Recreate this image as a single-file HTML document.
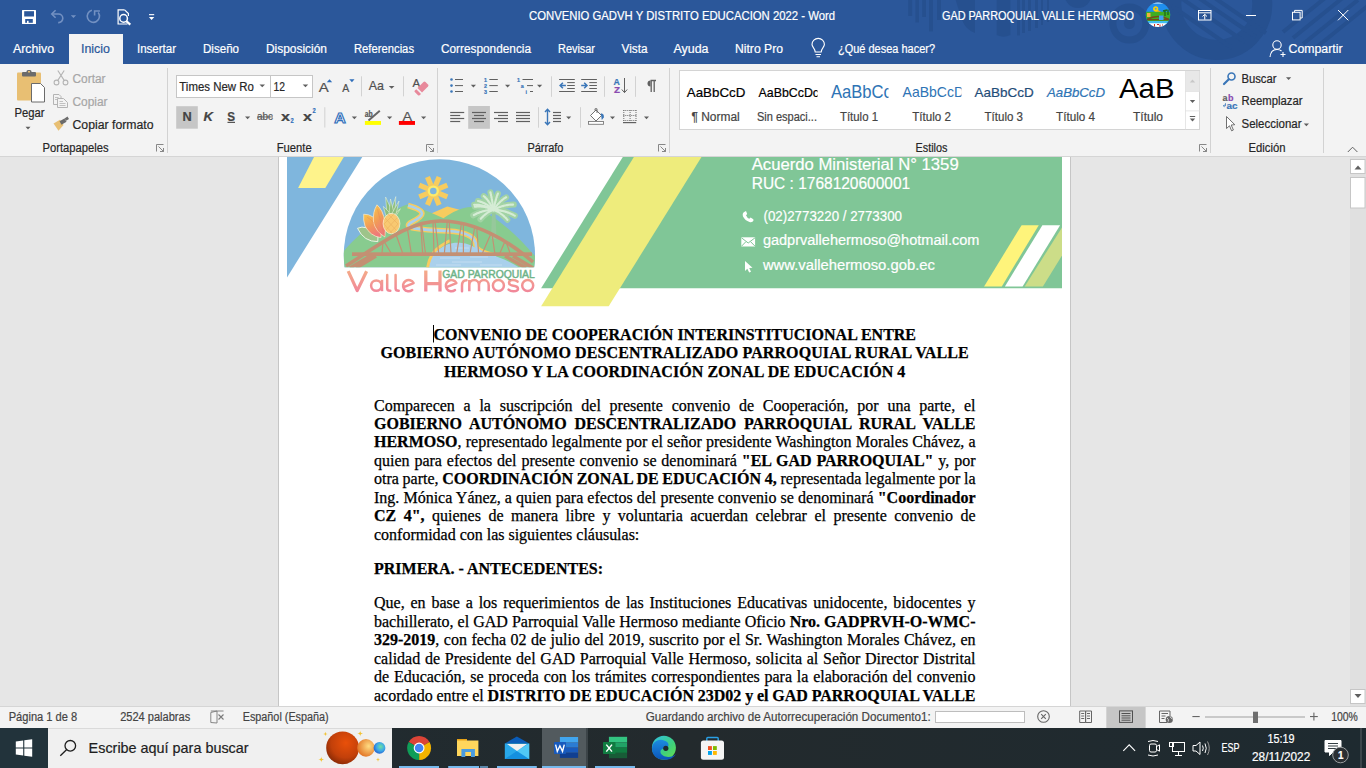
<!DOCTYPE html>
<html><head><meta charset="utf-8"><title>Word</title>
<style>
html,body{margin:0;padding:0;width:1366px;height:768px;overflow:hidden;background:#fff}
#ui{position:absolute;left:0;top:0}
#doc{position:absolute;left:0;top:0;width:1366px;height:706px;overflow:hidden}
.ln{position:absolute;left:374px;height:0;font-family:"Liberation Serif",serif;font-size:16px;line-height:0;color:#000;white-space:nowrap;-webkit-text-stroke:0.25px #000}
.ln b{font-weight:bold}
</style></head><body>
<svg id="ui" width="1366" height="768" viewBox="0 0 1366 768">
<rect x="0" y="0" width="1366" height="64" fill="#2B579A" />
<rect x="0" y="64" width="1366" height="92" fill="#F3F3F3" />
<rect x="0" y="156" width="1366" height="1" fill="#D5D5D5" />
<rect x="0" y="157" width="1366" height="549" fill="#E6E6E6" />
<rect x="278" y="157" width="1" height="549" fill="#C6C6C6" />
<rect x="279" y="157" width="791" height="549" fill="#FFFFFF" />
<rect x="1070" y="157" width="1" height="549" fill="#C6C6C6" />
<rect x="0" y="706" width="1366" height="1" fill="#D5D5D5" />
<rect x="0" y="707" width="1366" height="21" fill="#F3F3F3" />
<defs><linearGradient id="tb" x1="0" x2="1" y1="0" y2="0"><stop offset="0" stop-color="#1F2C32"/><stop offset="0.5" stop-color="#232A2D"/><stop offset="1" stop-color="#1E2A30"/></linearGradient></defs>
<rect x="0" y="728" width="1366" height="40" fill="url(#tb)" />
<rect x="0" y="728" width="48" height="40" fill="#22333B" />
<rect x="48" y="728" width="344" height="40" fill="#F0F0F0" />
<rect x="48" y="728" width="344" height="1" fill="#DADADA" />
<clipPath id="tbc"><rect x="0" y="0" width="1366" height="64"/></clipPath>
<g fill="#26508F" clip-path="url(#tbc)">
<rect x="908.2" y="0" width="4.0" height="16"/>
<rect x="915.4" y="0" width="3.6000000000000227" height="22.5"/>
<rect x="922.2" y="0" width="3.7999999999999545" height="17"/>
<rect x="929" y="0" width="4" height="31.4"/>
<rect x="937" y="0" width="4" height="20"/>
<rect x="1017" y="0" width="3" height="35.4"/>
<rect x="1022" y="0" width="3" height="33"/>
<rect x="1028" y="0" width="3" height="31"/>
<rect x="1035" y="0" width="3" height="28"/>
<rect x="1041" y="0" width="2" height="25"/>
<rect x="1047" y="0" width="2" height="22"/>
<path d="M955.7,0 H975 V33 Q966,30 962,20 Z"/><path d="M996.7,0 H1010.4 V35 Q1003.5,38.5 996.7,35Z"/>
<ellipse cx="1078" cy="-4" rx="13" ry="12"/>
</g>
<g fill="none" stroke="#26508F" clip-path="url(#tbc)">
<circle cx="1129.4" cy="23.5" r="16.5" stroke-width="7"/>
<circle cx="1216.8" cy="4.5" r="45.5" stroke-width="20"/>
<path d="M1181,-2 L1245,42 M1172,6 L1232,48 M1190,-8 L1256,37 M1200,-12 L1266,33" stroke-width="4"/>
<path d="M1293,38 L1345,-4 M1303,44 L1358,0 M1313,50 L1370,4 M1283,32 L1330,-6" stroke-width="4"/>
</g>
<circle cx="1129.4" cy="23.5" r="5.5" fill="#26508F"/>
<text x="529" y="20" font-family="Liberation Sans" font-size="12" fill="#FFFFFF" font-weight="normal" font-style="normal" text-anchor="start" textLength="306" lengthAdjust="spacingAndGlyphs" stroke="#FFFFFF" stroke-width="0.2" >CONVENIO GADVH Y DISTRITO EDUCACION 2022  -  Word</text>
<text x="942" y="20" font-family="Liberation Sans" font-size="12" fill="#FFFFFF" font-weight="normal" font-style="normal" text-anchor="start" textLength="192" lengthAdjust="spacingAndGlyphs" stroke="#FFFFFF" stroke-width="0.2" >GAD PARROQUIAL VALLE HERMOSO</text>
<rect x="69" y="34" width="54" height="30" fill="#F3F3F3" />
<text x="13" y="53" font-family="Liberation Sans" font-size="12" fill="#FFFFFF" font-weight="normal" font-style="normal" text-anchor="start" textLength="41" lengthAdjust="spacingAndGlyphs" stroke="#FFFFFF" stroke-width="0.2" >Archivo</text>
<text x="81" y="53" font-family="Liberation Sans" font-size="12" fill="#2B579A" font-weight="normal" font-style="normal" text-anchor="start" textLength="29" lengthAdjust="spacingAndGlyphs" stroke="#2B579A" stroke-width="0.2" >Inicio</text>
<text x="137" y="53" font-family="Liberation Sans" font-size="12" fill="#FFFFFF" font-weight="normal" font-style="normal" text-anchor="start" textLength="39" lengthAdjust="spacingAndGlyphs" stroke="#FFFFFF" stroke-width="0.2" >Insertar</text>
<text x="203" y="53" font-family="Liberation Sans" font-size="12" fill="#FFFFFF" font-weight="normal" font-style="normal" text-anchor="start" textLength="36" lengthAdjust="spacingAndGlyphs" stroke="#FFFFFF" stroke-width="0.2" >Diseño</text>
<text x="266" y="53" font-family="Liberation Sans" font-size="12" fill="#FFFFFF" font-weight="normal" font-style="normal" text-anchor="start" textLength="61" lengthAdjust="spacingAndGlyphs" stroke="#FFFFFF" stroke-width="0.2" >Disposición</text>
<text x="354" y="53" font-family="Liberation Sans" font-size="12" fill="#FFFFFF" font-weight="normal" font-style="normal" text-anchor="start" textLength="60" lengthAdjust="spacingAndGlyphs" stroke="#FFFFFF" stroke-width="0.2" >Referencias</text>
<text x="441" y="53" font-family="Liberation Sans" font-size="12" fill="#FFFFFF" font-weight="normal" font-style="normal" text-anchor="start" textLength="90" lengthAdjust="spacingAndGlyphs" stroke="#FFFFFF" stroke-width="0.2" >Correspondencia</text>
<text x="558" y="53" font-family="Liberation Sans" font-size="12" fill="#FFFFFF" font-weight="normal" font-style="normal" text-anchor="start" textLength="37" lengthAdjust="spacingAndGlyphs" stroke="#FFFFFF" stroke-width="0.2" >Revisar</text>
<text x="621.5" y="53" font-family="Liberation Sans" font-size="12" fill="#FFFFFF" font-weight="normal" font-style="normal" text-anchor="start" textLength="26" lengthAdjust="spacingAndGlyphs" stroke="#FFFFFF" stroke-width="0.2" >Vista</text>
<text x="673.5" y="53" font-family="Liberation Sans" font-size="12" fill="#FFFFFF" font-weight="normal" font-style="normal" text-anchor="start" textLength="35" lengthAdjust="spacingAndGlyphs" stroke="#FFFFFF" stroke-width="0.2" >Ayuda</text>
<text x="735" y="53" font-family="Liberation Sans" font-size="12" fill="#FFFFFF" font-weight="normal" font-style="normal" text-anchor="start" textLength="48" lengthAdjust="spacingAndGlyphs" stroke="#FFFFFF" stroke-width="0.2" >Nitro Pro</text>
<text x="838" y="53" font-family="Liberation Sans" font-size="12" fill="#FFFFFF" font-weight="normal" font-style="normal" text-anchor="start" textLength="97" lengthAdjust="spacingAndGlyphs" stroke="#FFFFFF" stroke-width="0.2" >¿Qué desea hacer?</text>
<text x="1288.5" y="53" font-family="Liberation Sans" font-size="12" fill="#FFFFFF" font-weight="normal" font-style="normal" text-anchor="start" textLength="54" lengthAdjust="spacingAndGlyphs" stroke="#FFFFFF" stroke-width="0.2" >Compartir</text>
<text x="72.5" y="83" font-family="Liberation Sans" font-size="12" fill="#A6A6A6" font-weight="normal" font-style="normal" text-anchor="start" textLength="33" lengthAdjust="spacingAndGlyphs" stroke="#A6A6A6" stroke-width="0.2" >Cortar</text>
<text x="72.5" y="106" font-family="Liberation Sans" font-size="12" fill="#A6A6A6" font-weight="normal" font-style="normal" text-anchor="start" textLength="35" lengthAdjust="spacingAndGlyphs" stroke="#A6A6A6" stroke-width="0.2" >Copiar</text>
<text x="72.5" y="128.5" font-family="Liberation Sans" font-size="12" fill="#262626" font-weight="normal" font-style="normal" text-anchor="start" textLength="81" lengthAdjust="spacingAndGlyphs" stroke="#262626" stroke-width="0.2" >Copiar formato</text>
<text x="14.5" y="116.5" font-family="Liberation Sans" font-size="12" fill="#262626" font-weight="normal" font-style="normal" text-anchor="start" textLength="30" lengthAdjust="spacingAndGlyphs" stroke="#262626" stroke-width="0.2" >Pegar</text>
<text x="42.5" y="151.5" font-family="Liberation Sans" font-size="12" fill="#262626" font-weight="normal" font-style="normal" text-anchor="start" textLength="66" lengthAdjust="spacingAndGlyphs" stroke="#262626" stroke-width="0.2" >Portapapeles</text>
<text x="276.7" y="151.5" font-family="Liberation Sans" font-size="12" fill="#262626" font-weight="normal" font-style="normal" text-anchor="start" textLength="35" lengthAdjust="spacingAndGlyphs" stroke="#262626" stroke-width="0.2" >Fuente</text>
<text x="527.4" y="151.5" font-family="Liberation Sans" font-size="12" fill="#262626" font-weight="normal" font-style="normal" text-anchor="start" textLength="36" lengthAdjust="spacingAndGlyphs" stroke="#262626" stroke-width="0.2" >Párrafo</text>
<text x="915.5" y="151.5" font-family="Liberation Sans" font-size="12" fill="#262626" font-weight="normal" font-style="normal" text-anchor="start" textLength="32" lengthAdjust="spacingAndGlyphs" stroke="#262626" stroke-width="0.2" >Estilos</text>
<text x="1248.5" y="151.5" font-family="Liberation Sans" font-size="12" fill="#262626" font-weight="normal" font-style="normal" text-anchor="start" textLength="37" lengthAdjust="spacingAndGlyphs" stroke="#262626" stroke-width="0.2" >Edición</text>
<text x="1241.5" y="82.8" font-family="Liberation Sans" font-size="12" fill="#262626" font-weight="normal" font-style="normal" text-anchor="start" textLength="35" lengthAdjust="spacingAndGlyphs" stroke="#262626" stroke-width="0.2" >Buscar</text>
<text x="1241.5" y="105.3" font-family="Liberation Sans" font-size="12" fill="#262626" font-weight="normal" font-style="normal" text-anchor="start" textLength="61" lengthAdjust="spacingAndGlyphs" stroke="#262626" stroke-width="0.2" >Reemplazar</text>
<text x="1241.5" y="128.4" font-family="Liberation Sans" font-size="12" fill="#262626" font-weight="normal" font-style="normal" text-anchor="start" textLength="60" lengthAdjust="spacingAndGlyphs" stroke="#262626" stroke-width="0.2" >Seleccionar</text>
<rect x="176.5" y="75.5" width="94" height="22" fill="#FFFFFF" stroke="#C6C6C6" stroke-width="1"/>
<rect x="270.5" y="75.5" width="42" height="22" fill="#FFFFFF" stroke="#C6C6C6" stroke-width="1"/>
<text x="179.3" y="91" font-family="Liberation Sans" font-size="12" fill="#262626" font-weight="normal" font-style="normal" text-anchor="start" textLength="74.5" lengthAdjust="spacingAndGlyphs" stroke="#262626" stroke-width="0.2" >Times New Ro</text>
<text x="273.6" y="91" font-family="Liberation Sans" font-size="12" fill="#262626" font-weight="normal" font-style="normal" text-anchor="start" textLength="11.5" lengthAdjust="spacingAndGlyphs" stroke="#262626" stroke-width="0.2" >12</text>
<rect x="679.5" y="70.5" width="520" height="59" fill="#FFFFFF" stroke="#D4D4D4" stroke-width="1"/>
<text x="686.8" y="96.8" font-family="Liberation Sans" font-size="13" fill="#000000" font-weight="normal" font-style="normal" text-anchor="start" textLength="58.6" lengthAdjust="spacingAndGlyphs" stroke="#000000" stroke-width="0.2" >AaBbCcD</text>
<clipPath id="st2"><rect x="750" y="72" width="67.5" height="30"/></clipPath><clipPath id="st3"><rect x="825" y="72" width="63.5" height="30"/></clipPath><clipPath id="st4"><rect x="895" y="72" width="66.5" height="30"/></clipPath><clipPath id="st7"><rect x="1110" y="79" width="70" height="25"/></clipPath>
<text x="758.5" y="96.8" font-family="Liberation Sans" font-size="13" fill="#000000" font-weight="normal" font-style="normal" text-anchor="start" textLength="60.5" lengthAdjust="spacingAndGlyphs" stroke="#000000" stroke-width="0.2" clip-path="url(#st2)">AaBbCcDc</text>
<text x="830.9" y="98.4" font-family="Liberation Sans" font-size="17.5" fill="#2E74B5" font-weight="normal" font-style="normal" text-anchor="start" textLength="61" lengthAdjust="spacingAndGlyphs" stroke="#2E74B5" stroke-width="0.2" clip-path="url(#st3)" style="stroke-width:0">AaBbCc</text>
<text x="902.6" y="97.1" font-family="Liberation Sans" font-size="14.5" fill="#2E74B5" font-weight="normal" font-style="normal" text-anchor="start" textLength="61.5" lengthAdjust="spacingAndGlyphs" stroke="#2E74B5" stroke-width="0.2" clip-path="url(#st4)" style="stroke-width:0">AaBbCcD</text>
<text x="974.6" y="97" font-family="Liberation Sans" font-size="13" fill="#1F4D78" font-weight="normal" font-style="normal" text-anchor="start" textLength="59.2" lengthAdjust="spacingAndGlyphs" stroke="#1F4D78" stroke-width="0.2" >AaBbCcD</text>
<text x="1047" y="97" font-family="Liberation Sans" font-size="13" fill="#2E74B5" font-weight="normal" font-style="italic" text-anchor="start" textLength="58" lengthAdjust="spacingAndGlyphs" stroke="#2E74B5" stroke-width="0.2" >AaBbCcD</text>
<text x="1119" y="98.3" font-family="Liberation Sans" font-size="28" fill="#000000" font-weight="normal" font-style="normal" text-anchor="start" textLength="55.6" lengthAdjust="spacingAndGlyphs" stroke="#000000" stroke-width="0.2" clip-path="url(#st7)" style="stroke-width:0">AaB</text>
<text x="691.5" y="120.6" font-family="Liberation Sans" font-size="12" fill="#444444" font-weight="normal" font-style="normal" text-anchor="start" textLength="48.2" lengthAdjust="spacingAndGlyphs" stroke="#444444" stroke-width="0.2" >¶ Normal</text>
<text x="757" y="120.6" font-family="Liberation Sans" font-size="12" fill="#444444" font-weight="normal" font-style="normal" text-anchor="start" textLength="60" lengthAdjust="spacingAndGlyphs" stroke="#444444" stroke-width="0.2" >Sin espaci...</text>
<text x="840" y="120.6" font-family="Liberation Sans" font-size="12" fill="#444444" font-weight="normal" font-style="normal" text-anchor="start" textLength="38" lengthAdjust="spacingAndGlyphs" stroke="#444444" stroke-width="0.2" >Título 1</text>
<text x="912.2" y="120.6" font-family="Liberation Sans" font-size="12" fill="#444444" font-weight="normal" font-style="normal" text-anchor="start" textLength="38.7" lengthAdjust="spacingAndGlyphs" stroke="#444444" stroke-width="0.2" >Título 2</text>
<text x="984.5" y="120.6" font-family="Liberation Sans" font-size="12" fill="#444444" font-weight="normal" font-style="normal" text-anchor="start" textLength="38.5" lengthAdjust="spacingAndGlyphs" stroke="#444444" stroke-width="0.2" >Título 3</text>
<text x="1056" y="120.6" font-family="Liberation Sans" font-size="12" fill="#444444" font-weight="normal" font-style="normal" text-anchor="start" textLength="39" lengthAdjust="spacingAndGlyphs" stroke="#444444" stroke-width="0.2" >Título 4</text>
<text x="1133" y="120.6" font-family="Liberation Sans" font-size="12" fill="#444444" font-weight="normal" font-style="normal" text-anchor="start" textLength="30" lengthAdjust="spacingAndGlyphs" stroke="#444444" stroke-width="0.2" >Título</text>
<rect x="22" y="10" width="14" height="14" fill="#fff" rx="0.5"/>
<rect x="24.2" y="11.2" width="9.8" height="5.3" fill="#2B579A"/>
<rect x="25.2" y="19" width="7.6" height="3.8" fill="#2B579A"/>
<rect x="27" y="20.8" width="1.6" height="2.2" fill="#fff"/>
<g fill="none" stroke="#7391C2" stroke-width="1.6"><path d="M52,14 H58.5 A4.3,4.3 0 0 1 58.5,22.6 H58.2"/><path d="M55.6,10.3 L51.8,14 L55.6,17.7"/></g>
<polygon points="70.8,15.2 76.1,15.2 73.45,18" fill="#7391C2"/>
<g fill="none" stroke="#7391C2" stroke-width="1.6"><path d="M91.9,10.3 A6.1,6.1 0 1 0 98.2,12.5"/><path d="M94.6,15.6 V11 H99.9"/></g>
<g fill="none" stroke="#fff" stroke-width="1.2"><path d="M124.6,9.9 H118.1 V24 H127.5"/><path d="M124.6,9.9 L128.4,13.5 V16"/></g>
<circle cx="123.6" cy="18.4" r="3.8" fill="none" stroke="#fff" stroke-width="1.5"/>
<path d="M126.3,21.1 L130.3,24.6" stroke="#fff" stroke-width="2.2"/>
<rect x="149" y="14.1" width="5.2" height="1.1" fill="#fff"/><polygon points="148.9,17 154.3,17 151.6,20" fill="#fff"/>
<clipPath id="av"><circle cx="1158" cy="14.8" r="12.2"/></clipPath>
<g clip-path="url(#av)"><rect x="1145" y="2" width="26" height="26" fill="#1F8EEE"/><rect x="1145" y="2" width="26" height="1.6" fill="#C8E4F8"/><path d="M1153,12.5 L1158,10 L1162,12.5Z" fill="#F0B020"/><rect x="1145" y="11.8" width="26" height="10" fill="#3FAE22"/><circle cx="1155.7" cy="8.8" r="2.6" fill="#FFD000"/><circle cx="1155.7" cy="8.8" r="1" fill="#3CA0E8"/><path d="M1147,19.5 Q1158,13.5 1169,19.5" fill="none" stroke="#7A4A1A" stroke-width="1.6"/><rect x="1147" y="19" width="22" height="1.3" fill="#7A4A1A"/><rect x="1147" y="13" width="3.5" height="4" fill="#F0B040"/><rect x="1159" y="15.5" width="4.5" height="4.5" fill="#40A0F0"/><path d="M1165,16 V10 M1163,11 L1167,10 M1168,15 V9.5" stroke="#1E6A1E" stroke-width="1.4"/><rect x="1145" y="21" width="26" height="2.2" fill="#40C0F0"/><rect x="1145" y="23.2" width="26" height="6" fill="#FFFFFF"/><path d="M1154.5,24 V27 M1157,24.5 H1159 M1160,24.5 V27 M1162,25 h1" stroke="#D03020" stroke-width="1"/></g>
<g fill="none" stroke="#fff" stroke-width="1"><rect x="1198.5" y="10.5" width="12.5" height="9.5"/><path d="M1198.5,12.8 H1211"/><path d="M1204.75,19.5 V14.5 M1202.5,16.5 L1204.75,14.3 L1207,16.5"/><path d="M1246,15.5 H1256"/><rect x="1292.5" y="12.3" width="7.6" height="7.6"/><path d="M1294.6,12.3 V10.4 H1302.2 V18 H1300.1"/><path d="M1338,10 L1348.3,20.3 M1348.3,10 L1338,20.3"/></g>
<g fill="none" stroke="#fff" stroke-width="1.1"><path d="M815.2,52 C815.2,48.5 812,47 812,44.6 A6.2,6.2 0 0 1 824.4,44.6 C824.4,47 821.2,48.5 821.2,52 Z"/><path d="M815.5,54.5 H821 M816.5,56.8 H820"/></g>
<g fill="none" stroke="#fff" stroke-width="1.1"><circle cx="1277" cy="45" r="4.2"/><path d="M1270,57 C1270.5,51.5 1273,49.5 1277,49.5 C1279,49.5 1280.5,50 1281.5,51"/><path d="M1280.5,54.5 H1285.5 M1283,52 V57"/></g>
<path d="M17,73.5 Q17,72.5 18,72.5 H40 Q41,72.5 41,73.5 V100.5 H18 Q17,100.5 17,99.5Z" fill="#E8BF73"/>
<rect x="22" y="72" width="14" height="4.5" fill="#6B6B6B" rx="1"/><rect x="26.5" y="70" width="5" height="3.5" fill="#6B6B6B" rx="1.5"/><rect x="28" y="71" width="2" height="1.5" fill="#E8BF73"/>
<path d="M31.5,83.5 H40.5 L44.5,87.5 V102 H31.5Z" fill="#fff" stroke="#6B6B6B" stroke-width="1"/>
<polygon points="25.5,126.8 30.5,126.8 28,129.5" fill="#5F5F5F"/>
<g fill="none" stroke="#B4B4B4" stroke-width="1.1"><circle cx="56.5" cy="82.5" r="2.4"/><circle cx="65.5" cy="82.5" r="2.4"/><path d="M57.8,80.4 L64.2,70.5 M64.2,80.4 L57.8,70.5"/></g>
<g fill="#F3F3F3" stroke="#B4B4B4" stroke-width="1"><path d="M53.5,94.5 H59 L61,96.5 V104.5 H53.5Z"/><path d="M57.5,98.5 H63.5 L67.5,102.5 V107.5 H57.5Z"/></g>
<path d="M55,97.5 H58.5 M55,99.5 H57 M59.5,101.5 H63 M59.5,103.5 H65.5 M59.5,105.5 H65.5" stroke="#B4B4B4" stroke-width="0.8"/>
<polygon points="53.5,123.5 60,119.8 63.5,125 58.5,130.8" fill="#E8BF73"/>
<path d="M59.5,121.3 L64.5,118.5 L66.5,121.8 L61.5,124.8Z" fill="#6B6B6B"/><path d="M64.5,118.5 L67.5,116.5 L69,119 L66,120.8" fill="#6B6B6B"/>
<g fill="none" stroke="#7A7A7A" stroke-width="0.9"><path d="M156.5,151.5 V144.5 H163.5"/><path d="M158.5,146.5 L163.5,151.5 M163.5,148 V151.5 H160"/></g>
<g fill="none" stroke="#7A7A7A" stroke-width="0.9"><path d="M426.5,151.5 V144.5 H433.5"/><path d="M428.5,146.5 L433.5,151.5 M433.5,148 V151.5 H430"/></g>
<g fill="none" stroke="#7A7A7A" stroke-width="0.9"><path d="M658.5,151.5 V144.5 H665.5"/><path d="M660.5,146.5 L665.5,151.5 M665.5,148 V151.5 H662"/></g>
<g fill="none" stroke="#7A7A7A" stroke-width="0.9"><path d="M1199.5,151.5 V144.5 H1206.5"/><path d="M1201.5,146.5 L1206.5,151.5 M1206.5,148 V151.5 H1203"/></g>
<rect x="167.0" y="68" width="1" height="85" fill="#D2D2D2"/>
<rect x="437.0" y="68" width="1" height="85" fill="#D2D2D2"/>
<rect x="669.0" y="68" width="1" height="85" fill="#D2D2D2"/>
<rect x="1210.0" y="68" width="1" height="85" fill="#D2D2D2"/>
<rect x="1323.0" y="68" width="1" height="85" fill="#D2D2D2"/>
<polygon points="259.5,84.5 265,84.5 262.25,87.3" fill="#5F5F5F"/>
<polygon points="302.7,84.5 308.2,84.5 305.45,87.3" fill="#5F5F5F"/>
<text x="318.8" y="92.3" font-family="Liberation Sans" font-size="13.5" fill="#505050" font-weight="normal" font-style="normal" text-anchor="start" textLength="10" lengthAdjust="spacingAndGlyphs" stroke="#505050" stroke-width="0.2" >A</text>
<polygon points="326.8,82.3 332.2,82.3 329.5,79.2" fill="#2F6EBA"/>
<text x="342.2" y="92.3" font-family="Liberation Sans" font-size="10" fill="#505050" font-weight="normal" font-style="normal" text-anchor="start" textLength="7" lengthAdjust="spacingAndGlyphs" stroke="#505050" stroke-width="0.2" >A</text>
<polygon points="349.3,79.2 354.5,79.2 351.9,82.2" fill="#2F6EBA"/>
<rect x="361" y="76.3" width="1" height="20" fill="#D2D2D2"/><rect x="403" y="76.3" width="1" height="20" fill="#D2D2D2"/>
<text x="368.8" y="90" font-family="Liberation Sans" font-size="13" fill="#505050" font-weight="normal" font-style="normal" text-anchor="start" textLength="15.2" lengthAdjust="spacingAndGlyphs" stroke="#505050" stroke-width="0.2" >Aa</text>
<polygon points="388.8,86 394.5,86 391.65,88.8" fill="#5F5F5F"/>
<text x="412.6" y="87.2" font-family="Liberation Sans" font-size="10" fill="#505050" font-weight="normal" font-style="normal" text-anchor="start" textLength="7.6" lengthAdjust="spacingAndGlyphs" stroke="#505050" stroke-width="0.2" >A</text>
<path d="M417.5,88 L423.5,82 Q424.5,81 425.5,82 L428,84.5 Q429,85.5 428,86.5 L422,92.5 Z" fill="#E8899B"/><path d="M416.3,89.2 L421,93.9 L419.6,95.2 Q418.8,96 418,95.2 L414.8,92 Q414,91.2 414.8,90.4 Z" fill="#E8899B"/>
<rect x="176.2" y="106.2" width="21.6" height="22.5" fill="#C6C6C6"/>
<text x="182.5" y="120.5" font-family="Liberation Sans" font-size="12" fill="#444444" font-weight="bold" font-style="normal" text-anchor="start" textLength="9.2" lengthAdjust="spacingAndGlyphs" stroke="#444444" stroke-width="0.2" >N</text>
<text x="203.5" y="120.5" font-family="Liberation Sans" font-size="12" fill="#444444" font-weight="bold" font-style="italic" text-anchor="start" textLength="9.5" lengthAdjust="spacingAndGlyphs" stroke="#444444" stroke-width="0.2" >K</text>
<text x="227.3" y="120.5" font-family="Liberation Sans" font-size="12" fill="#444444" font-weight="bold" font-style="normal" text-anchor="start" textLength="7.8" lengthAdjust="spacingAndGlyphs" stroke="#444444" stroke-width="0.2" >S</text>
<rect x="227.5" y="121.8" width="7.5" height="1.1" fill="#444444"/>
<polygon points="245,116.4 250.2,116.4 247.6,119.2" fill="#5F5F5F"/>
<text x="257" y="120.3" font-family="Liberation Sans" font-size="10.5" fill="#555555" font-weight="normal" font-style="normal" text-anchor="start" textLength="16" lengthAdjust="spacingAndGlyphs" stroke="#555555" stroke-width="0.2" >abc</text>
<rect x="257" y="116.5" width="16" height="0.9" fill="#555555"/>
<text x="281" y="120.5" font-family="Liberation Sans" font-size="12" fill="#444444" font-weight="bold" font-style="normal" text-anchor="start" textLength="9" lengthAdjust="spacingAndGlyphs" stroke="#444444" stroke-width="0.2" >x</text>
<text x="290.5" y="122.5" font-family="Liberation Sans" font-size="6.5" fill="#2F6EBA" font-weight="bold" font-style="normal" text-anchor="start" textLength="3.2" lengthAdjust="spacingAndGlyphs" stroke="#2F6EBA" stroke-width="0.2" >2</text>
<text x="303" y="120.5" font-family="Liberation Sans" font-size="12" fill="#444444" font-weight="bold" font-style="normal" text-anchor="start" textLength="9" lengthAdjust="spacingAndGlyphs" stroke="#444444" stroke-width="0.2" >x</text>
<text x="312.5" y="112.5" font-family="Liberation Sans" font-size="6.5" fill="#2F6EBA" font-weight="bold" font-style="normal" text-anchor="start" textLength="3.2" lengthAdjust="spacingAndGlyphs" stroke="#2F6EBA" stroke-width="0.2" >2</text>
<rect x="324.3" y="107.2" width="1" height="20.3" fill="#D2D2D2"/>
<text x="334.3" y="122.5" font-family="Liberation Sans" font-size="15" font-weight="bold" fill="#fff" stroke="#2F6EBA" stroke-width="1.1" textLength="11.5" lengthAdjust="spacingAndGlyphs">A</text>
<polygon points="351.8,116.4 357,116.4 354.4,119.2" fill="#5F5F5F"/>
<text x="364.8" y="116.8" font-family="Liberation Sans" font-size="8.5" fill="#555555" font-weight="bold" font-style="normal" text-anchor="start" textLength="8" lengthAdjust="spacingAndGlyphs" stroke="#555555" stroke-width="0.2" >ab</text>
<path d="M368.5,120.5 L379.8,110.8" stroke="#666" stroke-width="2"/>
<rect x="364.9" y="121" width="16.1" height="3.9" fill="#FFFF00"/>
<polygon points="387,116.4 392.2,116.4 389.6,119.2" fill="#5F5F5F"/>
<text x="402.5" y="120.8" font-family="Liberation Sans" font-size="13" fill="#555555" font-weight="normal" font-style="normal" text-anchor="start" textLength="9.6" lengthAdjust="spacingAndGlyphs" stroke="#555555" stroke-width="0.2" >A</text>
<rect x="398.9" y="121" width="16.1" height="3.9" fill="#FF0000"/>
<polygon points="421,116.4 426.2,116.4 423.6,119.2" fill="#5F5F5F"/>
<circle cx="451.5" cy="79.5" r="1.3" fill="#3A76B8"/><rect x="455" y="79.0" width="8" height="1" fill="#606060"/>
<rect x="489.3" y="79.0" width="8.5" height="1" fill="#606060"/>
<circle cx="451.5" cy="85.6" r="1.3" fill="#3A76B8"/><rect x="455" y="85.1" width="8" height="1" fill="#606060"/>
<rect x="489.3" y="85.1" width="8.5" height="1" fill="#606060"/>
<circle cx="451.5" cy="91.5" r="1.3" fill="#3A76B8"/><rect x="455" y="91.0" width="8" height="1" fill="#606060"/>
<rect x="489.3" y="91.0" width="8.5" height="1" fill="#606060"/>
<text x="484" y="81.8" font-family="Liberation Sans" font-size="5.5" fill="#3A76B8" font-weight="bold" font-style="normal" text-anchor="start" textLength="3" lengthAdjust="spacingAndGlyphs" stroke="#3A76B8" stroke-width="0.2" >1</text>
<text x="484" y="87.9" font-family="Liberation Sans" font-size="5.5" fill="#3A76B8" font-weight="bold" font-style="normal" text-anchor="start" textLength="3" lengthAdjust="spacingAndGlyphs" stroke="#3A76B8" stroke-width="0.2" >2</text>
<text x="484" y="93.8" font-family="Liberation Sans" font-size="5.5" fill="#3A76B8" font-weight="bold" font-style="normal" text-anchor="start" textLength="3" lengthAdjust="spacingAndGlyphs" stroke="#3A76B8" stroke-width="0.2" >3</text>
<text x="517" y="81.8" font-family="Liberation Sans" font-size="5.5" fill="#3A76B8" font-weight="bold" font-style="normal" text-anchor="start" textLength="3" lengthAdjust="spacingAndGlyphs" stroke="#3A76B8" stroke-width="0.2" >1</text>
<rect x="522.5" y="79" width="10.5" height="1" fill="#606060"/>
<text x="520.8" y="87.9" font-family="Liberation Sans" font-size="5.5" fill="#3A76B8" font-weight="bold" font-style="normal" text-anchor="start" textLength="3" lengthAdjust="spacingAndGlyphs" stroke="#3A76B8" stroke-width="0.2" >a</text>
<rect x="527" y="85.1" width="6" height="1" fill="#606060"/>
<text x="525.5" y="93.8" font-family="Liberation Sans" font-size="5.5" fill="#3A76B8" font-weight="bold" font-style="normal" text-anchor="start" textLength="1.5" lengthAdjust="spacingAndGlyphs" stroke="#3A76B8" stroke-width="0.2" >i</text>
<rect x="530" y="91" width="3" height="1" fill="#606060"/>
<polygon points="470.8,84.7 476.0,84.7 473.40000000000003,87.5" fill="#5F5F5F"/>
<polygon points="505,84.7 510.2,84.7 507.6,87.5" fill="#5F5F5F"/>
<polygon points="537,84.7 542.2,84.7 539.6,87.5" fill="#5F5F5F"/>
<rect x="551.0" y="76.3" width="1" height="20.5" fill="#D2D2D2"/>
<rect x="604.0" y="76.3" width="1" height="20.5" fill="#D2D2D2"/>
<rect x="635.0" y="76.3" width="1" height="20.5" fill="#D2D2D2"/>
<rect x="559.1" y="79" width="15.7" height="1" fill="#606060"/><rect x="559.1" y="91" width="15.7" height="1" fill="#606060"/>
<rect x="567.2" y="82.1" width="7.6" height="1" fill="#606060"/>
<rect x="567.2" y="85" width="7.6" height="1" fill="#606060"/>
<rect x="567.2" y="88" width="7.6" height="1" fill="#606060"/>
<path d="M565.9,85.5 H560.3000000000001 M562.9,82.7 L560.1,85.5 L562.9,88.3" fill="none" stroke="#3A76B8" stroke-width="1.5"/>
<rect x="581.2" y="79" width="15.7" height="1" fill="#606060"/><rect x="581.2" y="91" width="15.7" height="1" fill="#606060"/>
<rect x="589.3000000000001" y="82.1" width="7.6" height="1" fill="#606060"/>
<rect x="589.3000000000001" y="85" width="7.6" height="1" fill="#606060"/>
<rect x="589.3000000000001" y="88" width="7.6" height="1" fill="#606060"/>
<path d="M581.2,85.5 H586.8000000000001 M584.2,82.7 L587.0,85.5 L584.2,88.3" fill="none" stroke="#3A76B8" stroke-width="1.5"/>
<text x="613.6" y="84.7" font-family="Liberation Sans" font-size="8.5" fill="#3A76B8" font-weight="bold" font-style="normal" text-anchor="start" textLength="6.3" lengthAdjust="spacingAndGlyphs" stroke="#3A76B8" stroke-width="0.2" >A</text>
<text x="613.9" y="92.8" font-family="Liberation Sans" font-size="8.5" fill="#8A4BB0" font-weight="bold" font-style="normal" text-anchor="start" textLength="6" lengthAdjust="spacingAndGlyphs" stroke="#8A4BB0" stroke-width="0.2" >Z</text>
<path d="M624.5,78 V92.5 M621.8,89.5 L624.5,92.6 L627.2,89.5" fill="none" stroke="#606060" stroke-width="1"/>
<path d="M650.5,80.5 A3,3 0 0 0 650.5,86.5 Z" fill="#606060"/><path d="M650.5,80.5 H656 M651.2,80.5 V92 M654.2,80.5 V92" stroke="#606060" stroke-width="1.3" fill="none"/>
<rect x="450.2" y="111.9" width="14" height="1.2" fill="#606060"/>
<rect x="450.2" y="114.9" width="10" height="1.2" fill="#606060"/>
<rect x="450.2" y="117.9" width="14" height="1.2" fill="#606060"/>
<rect x="450.2" y="120.9" width="10" height="1.2" fill="#606060"/>
<rect x="468.2" y="106" width="21.7" height="22.8" fill="#C6C6C6"/>
<rect x="472" y="111.9" width="14" height="1.2" fill="#606060"/>
<rect x="474" y="114.9" width="10" height="1.2" fill="#606060"/>
<rect x="472" y="117.9" width="14" height="1.2" fill="#606060"/>
<rect x="474" y="120.9" width="10" height="1.2" fill="#606060"/>
<rect x="494" y="111.9" width="14" height="1.2" fill="#606060"/>
<rect x="498" y="114.9" width="10" height="1.2" fill="#606060"/>
<rect x="494" y="117.9" width="14" height="1.2" fill="#606060"/>
<rect x="498" y="120.9" width="10" height="1.2" fill="#606060"/>
<rect x="516" y="111.9" width="14" height="1.2" fill="#606060"/>
<rect x="516" y="114.9" width="14" height="1.2" fill="#606060"/>
<rect x="516" y="117.9" width="14" height="1.2" fill="#606060"/>
<rect x="516" y="120.9" width="14" height="1.2" fill="#606060"/>
<rect x="538" y="107.2" width="1" height="20.5" fill="#D2D2D2"/><rect x="580" y="107.2" width="1" height="20.5" fill="#D2D2D2"/>
<path d="M547.5,109.5 V124.5 M545,112 L547.5,109.3 L550,112 M545,122 L547.5,124.7 L550,122" fill="none" stroke="#3A76B8" stroke-width="1.4"/>
<rect x="553" y="111.9" width="8" height="1.2" fill="#606060"/>
<rect x="553" y="114.9" width="8" height="1.2" fill="#606060"/>
<rect x="553" y="117.9" width="8" height="1.2" fill="#606060"/>
<rect x="553" y="120.9" width="8" height="1.2" fill="#606060"/>
<polygon points="566.2,116.4 571.2,116.4 568.7,119.2" fill="#5F5F5F"/>
<polygon points="610,116.4 615,116.4 612.5,119.2" fill="#5F5F5F"/>
<polygon points="644,116.4 649,116.4 646.5,119.2" fill="#5F5F5F"/>
<path d="M590.5,115.5 L596,110 L601.5,115.5 L596,121Z" fill="#fff" stroke="#606060" stroke-width="0.9"/><path d="M595,110.5 V108.8 H597 V113" fill="none" stroke="#606060" stroke-width="0.9"/>
<path d="M600.8,113.2 Q604.5,113.8 603.8,117.5 L601.8,120 Z" fill="#3A76B8"/>
<rect x="588.5" y="121.5" width="15" height="2.8" fill="#fff" stroke="#7A7A7A" stroke-width="0.9"/>
<rect x="623.3" y="110.0" width="1" height="1" fill="#707070"/>
<rect x="625.3" y="110.0" width="1" height="1" fill="#707070"/>
<rect x="627.3" y="110.0" width="1" height="1" fill="#707070"/>
<rect x="629.3" y="110.0" width="1" height="1" fill="#707070"/>
<rect x="631.3" y="110.0" width="1" height="1" fill="#707070"/>
<rect x="633.3" y="110.0" width="1" height="1" fill="#707070"/>
<rect x="635.3" y="110.0" width="1" height="1" fill="#707070"/>
<rect x="623.3" y="115.0" width="1" height="1" fill="#707070"/>
<rect x="625.3" y="115.0" width="1" height="1" fill="#707070"/>
<rect x="627.3" y="115.0" width="1" height="1" fill="#707070"/>
<rect x="629.3" y="115.0" width="1" height="1" fill="#707070"/>
<rect x="631.3" y="115.0" width="1" height="1" fill="#707070"/>
<rect x="633.3" y="115.0" width="1" height="1" fill="#707070"/>
<rect x="635.3" y="115.0" width="1" height="1" fill="#707070"/>
<rect x="623.3" y="120.0" width="1" height="1" fill="#707070"/>
<rect x="625.3" y="120.0" width="1" height="1" fill="#707070"/>
<rect x="627.3" y="120.0" width="1" height="1" fill="#707070"/>
<rect x="629.3" y="120.0" width="1" height="1" fill="#707070"/>
<rect x="631.3" y="120.0" width="1" height="1" fill="#707070"/>
<rect x="633.3" y="120.0" width="1" height="1" fill="#707070"/>
<rect x="635.3" y="120.0" width="1" height="1" fill="#707070"/>
<rect x="623.3" y="110" width="1" height="1" fill="#707070"/>
<rect x="623.3" y="112" width="1" height="1" fill="#707070"/>
<rect x="623.3" y="114" width="1" height="1" fill="#707070"/>
<rect x="623.3" y="116" width="1" height="1" fill="#707070"/>
<rect x="623.3" y="118" width="1" height="1" fill="#707070"/>
<rect x="623.3" y="120" width="1" height="1" fill="#707070"/>
<rect x="629.6" y="110" width="1" height="1" fill="#707070"/>
<rect x="629.6" y="112" width="1" height="1" fill="#707070"/>
<rect x="629.6" y="114" width="1" height="1" fill="#707070"/>
<rect x="629.6" y="116" width="1" height="1" fill="#707070"/>
<rect x="629.6" y="118" width="1" height="1" fill="#707070"/>
<rect x="629.6" y="120" width="1" height="1" fill="#707070"/>
<rect x="635.5" y="110" width="1" height="1" fill="#707070"/>
<rect x="635.5" y="112" width="1" height="1" fill="#707070"/>
<rect x="635.5" y="114" width="1" height="1" fill="#707070"/>
<rect x="635.5" y="116" width="1" height="1" fill="#707070"/>
<rect x="635.5" y="118" width="1" height="1" fill="#707070"/>
<rect x="635.5" y="120" width="1" height="1" fill="#707070"/>
<rect x="623" y="122" width="13.2" height="1.2" fill="#606060"/>
<rect x="1185.5" y="71" width="14" height="20" fill="#E8E8E8"/><rect x="1185" y="70.8" width="0.8" height="58.5" fill="#E0E0E0"/>
<rect x="1185" y="91" width="14.7" height="0.8" fill="#E0E0E0"/><rect x="1185" y="110.5" width="14.7" height="0.8" fill="#E0E0E0"/>
<polygon points="1189.8,82.5 1195.2,82.5 1192.5,79.5" fill="#C8C8C8"/>
<polygon points="1189.8,100 1195.2,100 1192.5,103" fill="#606060"/>
<rect x="1189.8" y="116" width="5.4" height="1" fill="#606060"/><polygon points="1189.8,118.5 1195.2,118.5 1192.5,121.5" fill="#606060"/>
<circle cx="1231.5" cy="76.5" r="3.5" fill="none" stroke="#3A76B8" stroke-width="1.6"/><path d="M1228.8,79.3 L1224,84" stroke="#3A76B8" stroke-width="2.2" stroke-linecap="round"/>
<polygon points="1286,77.3 1291.2,77.3 1288.6,80" fill="#5F5F5F"/>
<text x="1222.5" y="100.8" font-family="Liberation Sans" font-size="9" fill="#606060" font-weight="bold" font-style="normal" text-anchor="start" textLength="5" lengthAdjust="spacingAndGlyphs" stroke="#606060" stroke-width="0.2" >a</text>
<text x="1228" y="100.8" font-family="Liberation Sans" font-size="9" fill="#8A4BB0" font-weight="bold" font-style="normal" text-anchor="start" textLength="5.5" lengthAdjust="spacingAndGlyphs" stroke="#8A4BB0" stroke-width="0.2" >b</text>
<text x="1226.5" y="108.5" font-family="Liberation Sans" font-size="9" fill="#3A76B8" font-weight="bold" font-style="normal" text-anchor="start" textLength="11" lengthAdjust="spacingAndGlyphs" stroke="#3A76B8" stroke-width="0.2" >ac</text>
<path d="M1225.5,103.2 V105.8 H1223.5 M1224.6,104.8 L1223.3,105.8 L1224.6,106.8" fill="none" stroke="#3A76B8" stroke-width="0.8"/>
<path d="M1226.5,116.5 L1234.8,124.7 L1231.2,125 L1233.4,130 L1231.6,130.8 L1229.5,125.8 L1226.5,128.5 Z" fill="#fff" stroke="#606060" stroke-width="0.9"/>
<polygon points="1303.8,123.5 1309,123.5 1306.4,126.2" fill="#5F5F5F"/>
<path d="M1347.8,152 L1352.6,147.2 L1357.4,152" fill="none" stroke="#606060" stroke-width="1"/>
<defs><clipPath id="pg"><rect x="279" y="157" width="791" height="549"/></clipPath></defs>
<g clip-path="url(#pg)">
<polygon points="287,157 362.3,157 287,277.4" fill="#7FB6DD"/>
<polygon points="314,157 343.8,157 325.3,188 298.1,188" fill="#FEF38B"/>
<polygon points="622.8,157 1062,157 1062,288.3 541.1,288.3" fill="#80C697"/>
<polygon points="633.9,157 701.5,157 608.7,306.3 541.1,306.3" fill="#EEEC7C"/>
<polygon points="1021.6,225.2 1038.75,225.2 1001.8,286.4 984.1,286.4" fill="#FEF47B"/>
<polygon points="1042.4,225.2 1060.1,225.2 1022.6,286.4 1004.9,286.4" fill="#FFFFFF"/>
<polygon points="1062,227.5 1062,255.6 1042.9,286.4 1024.7,286.4" fill="#CCDD88"/>
</g>
<text x="751.7" y="169.6" font-family="Liberation Sans" font-size="16" fill="#FFFFFF" font-weight="normal" font-style="normal" text-anchor="start" textLength="207" lengthAdjust="spacingAndGlyphs" stroke="#FFFFFF" stroke-width="0.2" >Acuerdo Ministerial N° 1359</text>
<text x="751.7" y="189" font-family="Liberation Sans" font-size="16" fill="#FFFFFF" font-weight="normal" font-style="normal" text-anchor="start" textLength="158.5" lengthAdjust="spacingAndGlyphs" stroke="#FFFFFF" stroke-width="0.2" >RUC : 1768120600001</text>
<text x="763.5" y="221.2" font-family="Liberation Sans" font-size="14" fill="#FFFFFF" font-weight="normal" font-style="normal" text-anchor="start" textLength="138.5" lengthAdjust="spacingAndGlyphs" stroke="#FFFFFF" stroke-width="0.2" >(02)2773220 / 2773300</text>
<text x="762.9" y="245.2" font-family="Liberation Sans" font-size="14" fill="#FFFFFF" font-weight="normal" font-style="normal" text-anchor="start" textLength="216.5" lengthAdjust="spacingAndGlyphs" stroke="#FFFFFF" stroke-width="0.2" >gadprvallehermoso@hotmail.com</text>
<text x="762.9" y="270" font-family="Liberation Sans" font-size="14" fill="#FFFFFF" font-weight="normal" font-style="normal" text-anchor="start" textLength="172" lengthAdjust="spacingAndGlyphs" stroke="#FFFFFF" stroke-width="0.2" >www.vallehermoso.gob.ec</text>
<clipPath id="lg"><path d="M344.6,267.2 A95.6,95.6 0 1 1 534.2,267.2 Z"/></clipPath>
<g clip-path="url(#lg)">
<rect x="340" y="155" width="200" height="113" fill="#7FB6DD"/>
<rect x="430.7" y="175.8" width="5.2" height="9" fill="#F7CC5F" transform="rotate(22.5 433.3 191)"/>
<rect x="430.7" y="175.8" width="5.2" height="9" fill="#F7CC5F" transform="rotate(67.5 433.3 191)"/>
<rect x="430.7" y="175.8" width="5.2" height="9" fill="#F7CC5F" transform="rotate(112.5 433.3 191)"/>
<rect x="430.7" y="175.8" width="5.2" height="9" fill="#F7CC5F" transform="rotate(157.5 433.3 191)"/>
<rect x="430.7" y="175.8" width="5.2" height="9" fill="#F7CC5F" transform="rotate(202.5 433.3 191)"/>
<rect x="430.7" y="175.8" width="5.2" height="9" fill="#F7CC5F" transform="rotate(247.5 433.3 191)"/>
<rect x="430.7" y="175.8" width="5.2" height="9" fill="#F7CC5F" transform="rotate(292.5 433.3 191)"/>
<rect x="430.7" y="175.8" width="5.2" height="9" fill="#F7CC5F" transform="rotate(337.5 433.3 191)"/>
<circle cx="433.3" cy="191" r="7" fill="#F7CC5F"/><circle cx="433.3" cy="191" r="5.6" fill="#FCEB6A"/><circle cx="433.3" cy="191" r="3.3" fill="#7FB6DD"/>
<polygon points="430,214 447.3,206.4 459.6,209.7 446,222" fill="#F7CC5F"/>
<path d="M336,270 L344,251 C356,236 385,212 407.4,204.5 C418,207 428,211 443.5,218.3 C452,212 462,207 471,206.9 C492,212 515,232 540,262 L540,270 Z" fill="#88CB8F"/>
<path d="M408,205.5 C428,211 424,216 412,222 C400,228 420,230 448,231 C470,232 476,238 476,246 C477,252 486,254 496,256" fill="none" stroke="#F7CC5F" stroke-width="5.5"/>
<path d="M408,205.5 C428,211 424,216 412,222 C400,228 420,230 448,231 C470,232 476,238 476,246 C477,252 486,254 496,256" fill="none" stroke="#A9D0EC" stroke-width="2.6"/>
<path d="M438,250 C446,244 452,242 462,243 C472,244 476,249 486,253 C498,257 510,261 520,268 L428,268 C428,260 432,254 438,250Z" fill="#A9D0EC"/>
<path d="M450,240.5 C440,246 430,251 427.5,268" fill="none" stroke="#F7CC5F" stroke-width="3"/>
<g stroke="#D8EAF6" stroke-width="0.7" opacity="0.8"><path d="M440,258 h20 M452,262 h30 M470,257 h18 M436,265 h25 M480,265 h22 M455,248 h14"/></g>
<g fill="none" stroke-linecap="round">
<path d="M493.5,210 Q485.7,202.5 477.9,201.0" stroke="#A2D3A4" stroke-width="6"/>
<path d="M493.5,210 Q488.6,200.0 483.7,196.1" stroke="#A2D3A4" stroke-width="6"/>
<path d="M493.5,210 Q491.9,198.1 490.4,192.3" stroke="#A2D3A4" stroke-width="6"/>
<path d="M493.5,210 Q495.7,198.8 497.9,193.6" stroke="#A2D3A4" stroke-width="6"/>
<path d="M493.5,210 Q499.9,200.6 506.2,197.3" stroke="#A2D3A4" stroke-width="6"/>
<path d="M493.5,210 Q503.6,204.3 513.8,204.6" stroke="#A2D3A4" stroke-width="6"/>
<path d="M493.5,210 Q504.1,209.8 514.8,215.7" stroke="#A2D3A4" stroke-width="6"/>
<path d="M493.5,210 Q500.5,211.9 507.4,219.8" stroke="#A2D3A4" stroke-width="6"/>
<path d="M493.5,210 Q483.4,209.7 473.2,215.4" stroke="#A2D3A4" stroke-width="6"/>
<path d="M493.5,210 Q483.8,204.4 474.2,204.8" stroke="#A2D3A4" stroke-width="6"/>
<path d="M493.5,210 Q486.9,211.6 480.4,219.2" stroke="#A2D3A4" stroke-width="6"/>
<path d="M493.5,210 Q484.1,205.4 474.8,206.7" stroke="#A2D3A4" stroke-width="6"/>
<path d="M493.5,210 Q485.7,202.5 477.9,201.0" stroke="#D5ECD5" stroke-width="2.2" stroke-dasharray="1.3 1.1"/>
<path d="M493.5,210 Q488.6,200.0 483.7,196.1" stroke="#D5ECD5" stroke-width="2.2" stroke-dasharray="1.3 1.1"/>
<path d="M493.5,210 Q491.9,198.1 490.4,192.3" stroke="#D5ECD5" stroke-width="2.2" stroke-dasharray="1.3 1.1"/>
<path d="M493.5,210 Q495.7,198.8 497.9,193.6" stroke="#D5ECD5" stroke-width="2.2" stroke-dasharray="1.3 1.1"/>
<path d="M493.5,210 Q499.9,200.6 506.2,197.3" stroke="#D5ECD5" stroke-width="2.2" stroke-dasharray="1.3 1.1"/>
<path d="M493.5,210 Q503.6,204.3 513.8,204.6" stroke="#D5ECD5" stroke-width="2.2" stroke-dasharray="1.3 1.1"/>
<path d="M493.5,210 Q504.1,209.8 514.8,215.7" stroke="#D5ECD5" stroke-width="2.2" stroke-dasharray="1.3 1.1"/>
<path d="M493.5,210 Q500.5,211.9 507.4,219.8" stroke="#D5ECD5" stroke-width="2.2" stroke-dasharray="1.3 1.1"/>
<path d="M493.5,210 Q483.4,209.7 473.2,215.4" stroke="#D5ECD5" stroke-width="2.2" stroke-dasharray="1.3 1.1"/>
<path d="M493.5,210 Q483.8,204.4 474.2,204.8" stroke="#D5ECD5" stroke-width="2.2" stroke-dasharray="1.3 1.1"/>
<path d="M493.5,210 Q486.9,211.6 480.4,219.2" stroke="#D5ECD5" stroke-width="2.2" stroke-dasharray="1.3 1.1"/>
<path d="M493.5,210 Q484.1,205.4 474.8,206.7" stroke="#D5ECD5" stroke-width="2.2" stroke-dasharray="1.3 1.1"/>
</g>
<path d="M492,213 L495.5,213 L496.5,239 L491,239Z" fill="#96C89B"/>
<path d="M357.5,228.3 Q366,224 378,235 L377.8,241.6 Q364,242 357.5,228.3Z" fill="#9DC48A" stroke="#F4F8EE" stroke-width="0.9"/>
<defs><linearGradient id="cac" x1="0" y1="0" x2="0.4" y2="1"><stop offset="0" stop-color="#F9C84A"/><stop offset="0.55" stop-color="#F29A58"/><stop offset="1" stop-color="#EE7A7A"/></linearGradient></defs>
<path d="M363.7,214.2 Q374,214 379,225 Q382,232 380.9,237.7 Q370,236 365,226 Q363,220 363.7,214.2Z" fill="url(#cac)" stroke="#FBEBD0" stroke-width="0.7"/>
<path d="M377,204.8 Q383,210 385,222 Q386,231 384.8,236.9 Q376,232 373.5,222 Q372.5,212 377,204.8Z" fill="url(#cac)" stroke="#FBEBD0" stroke-width="0.7"/>
<path d="M367,217 Q376,222 380.5,236 M377.5,209 Q380,220 384.5,236" fill="none" stroke="#E88A50" stroke-width="0.6" opacity="0.7"/>
<g fill="#8DBE7C" stroke="#EEF6E8" stroke-width="0.5"><path d="M387,215 L385.6,197 L392.5,212Z"/><path d="M390,214 L395.8,196.6 L395,212Z"/><path d="M392,216 L400.4,208.8 L396.5,215Z"/><path d="M386,216 L383.3,206.4 L391,214Z"/><path d="M389,214 L390.5,199 L394,213Z"/><path d="M391,215 L399,201 L396,214Z"/></g>
<ellipse cx="391.5" cy="223.6" rx="8.4" ry="10.2" fill="#F8C971" stroke="#FBF1D8" stroke-width="0.7"/>
<g stroke="#E8A85A" stroke-width="0.55" opacity="0.85"><path d="M385,218 L396,230 M384,224 L392,233 M388,214 L398,224 M397,218 L386,230 M398,224 L390,233 M394,214 L384,224"/></g>
<path d="M346,266 C382,243 410,221 440,221 C475,221 505,238 533,262" fill="none" stroke="#C39073" stroke-width="3.6"/>
<path d="M396,234.5 L402.6,253 M407.4,228.8 L411.2,253 M420.7,223.9 L422.6,253 M421.6,223.6 L425.4,253 M433,221.4 L434,253 M435,221.2 L438.7,253 M447.3,221.2 L444.4,253 M449.2,221.4 L451,253 M461.5,223.2 L456.8,253 M463.4,223.6 L463.4,253 M474.8,226.7 L470.1,253 M476.7,227.4 L478.6,253 M491,233.4 L482.5,253 M492,233.9 L494.8,253 M383,242.1 L382,253 M384,241.4 L391,253 M505,241.2 L500,253 M506,241.8 L510,253" stroke="#C39073" stroke-width="1.2" fill="none"/>
<rect x="352" y="252.3" width="180" height="3.7" fill="#C39073"/>
<path d="M350,268 L372,255 M356,268 L376,256 M533,268 L513,256 M526,268 L505,256" stroke="#C39073" stroke-width="3.5"/>
</g>
<linearGradient id="vh" x1="0" y1="270" x2="0" y2="292" gradientUnits="userSpaceOnUse"><stop offset="0" stop-color="#F4AC88"/><stop offset="1" stop-color="#F1879A"/></linearGradient>
<g fill="none" stroke="url(#vh)" stroke-width="2.5" stroke-linecap="round" stroke-linejoin="round"><path d="M348.2,271.2 L357.2,290.6 L366.6,271.2" stroke-width="3.2" stroke-linecap="butt"/><circle cx="376.3" cy="285.6" r="5.2"/><path d="M382,279.8 V291.2" stroke-linecap="butt"/><path d="M387.2,275 V288.5 Q387.2,290.8 390.3,290.8"/><path d="M395.6,275 V288.5 Q395.6,290.8 398.7,290.8"/><path d="M403.2,287.4 L413.6,283.1 A5.6,5.6 0 1 0 412.2,290"/><path d="M425.8,270.6 V291.5 M440,270.6 V291.5 M425.8,283.6 H440" stroke-width="3.3" stroke-linecap="butt"/><path d="M446,287.4 L456.4,283.1 A5.6,5.6 0 1 0 455,290"/><path d="M462,291.2 V285.5 Q462,280.3 466.5,280.2"/><path d="M469.3,291.2 V280 M469.3,285.4 A4.8,5.3 0 0 1 479,285.4 V291.2 M479,285.4 A4.8,5.3 0 0 1 488.7,285.4 V291.2" stroke-linecap="butt"/><circle cx="498.4" cy="285.6" r="5.5"/><path d="M517.5,281.6 Q515.5,280 513,280 Q509,280 509,282.7 Q509,285.2 513.3,285.7 Q518,286.2 518,288.7 Q518,291.2 513.3,291.2 Q510.3,291.2 508.6,289.6"/><circle cx="527.7" cy="285.6" r="5.5"/></g>
<text x="442.3" y="278.4" font-family="Liberation Sans" font-size="10" fill="#6FB389" font-weight="normal" font-style="normal" text-anchor="start" textLength="92.5" lengthAdjust="spacingAndGlyphs" stroke="#6FB389" stroke-width="0.2" style="stroke-width:0.45">GAD PARROQUIAL</text>
<text x="8.7" y="721" font-family="Liberation Sans" font-size="12" fill="#444444" font-weight="normal" font-style="normal" text-anchor="start" textLength="68.5" lengthAdjust="spacingAndGlyphs" stroke="#444444" stroke-width="0.2" >Página 1 de 8</text>
<text x="120.2" y="721" font-family="Liberation Sans" font-size="12" fill="#444444" font-weight="normal" font-style="normal" text-anchor="start" textLength="70" lengthAdjust="spacingAndGlyphs" stroke="#444444" stroke-width="0.2" >2524 palabras</text>
<text x="242.7" y="721" font-family="Liberation Sans" font-size="12" fill="#444444" font-weight="normal" font-style="normal" text-anchor="start" textLength="86" lengthAdjust="spacingAndGlyphs" stroke="#444444" stroke-width="0.2" >Español (España)</text>
<text x="645.7" y="721" font-family="Liberation Sans" font-size="12" fill="#444444" font-weight="normal" font-style="normal" text-anchor="start" textLength="285" lengthAdjust="spacingAndGlyphs" stroke="#444444" stroke-width="0.2" >Guardando archivo de Autorrecuperación Documento1:</text>
<rect x="935.5" y="711.5" width="89" height="11" fill="#FFFFFF" stroke="#BDBDBD" stroke-width="1"/>
<text x="1331.2" y="721" font-family="Liberation Sans" font-size="12" fill="#444444" font-weight="normal" font-style="normal" text-anchor="start" textLength="26.7" lengthAdjust="spacingAndGlyphs" stroke="#444444" stroke-width="0.2" >100%</text>
<rect x="1205" y="716.5" width="100" height="1" fill="#A0A0A0" />
<rect x="1253" y="711.7" width="5" height="11.3" fill="#6E6E6E" />
<text x="88.6" y="753.4" font-family="Liberation Sans" font-size="14.5" fill="#1E1E1E" font-weight="normal" font-style="normal" text-anchor="start" textLength="160" lengthAdjust="spacingAndGlyphs" stroke="#1E1E1E" stroke-width="0.2" >Escribe aquí para buscar</text>
<text x="1221.5" y="751.7" font-family="Liberation Sans" font-size="12" fill="#FFFFFF" font-weight="normal" font-style="normal" text-anchor="start" textLength="18" lengthAdjust="spacingAndGlyphs" stroke="#FFFFFF" stroke-width="0.2" >ESP</text>
<text x="1267.4" y="742.5" font-family="Liberation Sans" font-size="12" fill="#FFFFFF" font-weight="normal" font-style="normal" text-anchor="start" textLength="27" lengthAdjust="spacingAndGlyphs" stroke="#FFFFFF" stroke-width="0.2" >15:19</text>
<text x="1252" y="761" font-family="Liberation Sans" font-size="12" fill="#FFFFFF" font-weight="normal" font-style="normal" text-anchor="start" textLength="58.2" lengthAdjust="spacingAndGlyphs" stroke="#FFFFFF" stroke-width="0.2" >28/11/2022</text>
<g fill="#FFFFFF"><polygon points="15.8,741.6 23.2,740.5 23.2,747.5 15.8,747.5"/><polygon points="24.3,740.3 32.2,739.2 32.2,747.5 24.3,747.5"/><polygon points="15.8,748.6 23.2,748.6 23.2,755.6 15.8,754.6"/><polygon points="24.3,748.6 32.2,748.6 32.2,756.8 24.3,755.8"/></g>
<g fill="none" stroke="#1E1E1E" stroke-width="1.3"><circle cx="70.3" cy="745.8" r="5.3"/><path d="M66.5,749.7 L60.3,755.8"/></g>
<defs><radialGradient id="pl1" cx="0.6" cy="0.35" r="0.75"><stop offset="0" stop-color="#E9500A"/><stop offset="0.6" stop-color="#C2400A"/><stop offset="1" stop-color="#7A2404"/></radialGradient><radialGradient id="pl2" cx="0.65" cy="0.4" r="0.7"><stop offset="0" stop-color="#FFDC82"/><stop offset="1" stop-color="#E06E20"/></radialGradient><radialGradient id="pl3" cx="0.6" cy="0.4" r="0.7"><stop offset="0" stop-color="#6FE0A0"/><stop offset="0.5" stop-color="#3CA8E8"/><stop offset="1" stop-color="#2050C8"/></radialGradient></defs>
<circle cx="342.6" cy="747.9" r="16.4" fill="url(#pl1)"/>
<circle cx="366" cy="747.9" r="8.8" fill="url(#pl2)"/>
<circle cx="379.5" cy="747.9" r="5.9" fill="url(#pl3)"/>
<path d="M325.4,731.6999999999999 Q325.4,733.9 327.59999999999997,733.9 Q325.4,733.9 325.4,736.1 Q325.4,733.9 323.2,733.9 Q325.4,733.9 325.4,731.6999999999999Z" fill="#F2C230"/>
<path d="M360.2,730.5 Q360.2,733.5 363.2,733.5 Q360.2,733.5 360.2,736.5 Q360.2,733.5 357.2,733.5 Q360.2,733.5 360.2,730.5Z" fill="#F2C230"/>
<path d="M321.3,756.5 Q321.3,759.5 324.3,759.5 Q321.3,759.5 321.3,762.5 Q321.3,759.5 318.3,759.5 Q321.3,759.5 321.3,756.5Z" fill="#F2C230"/>
<path d="M378,757.4 Q378,759.6 380.2,759.6 Q378,759.6 378,761.8000000000001 Q378,759.6 375.8,759.6 Q378,759.6 378,757.4Z" fill="#F2C230"/>
<rect x="399" y="766" width="40" height="2" fill="#76B9ED"/>
<rect x="448.2" y="766" width="30.80000000000001" height="2" fill="#76B9ED"/>
<rect x="480" y="766" width="8" height="2" fill="#5A87AA"/>
<rect x="497" y="766" width="39.799999999999955" height="2" fill="#76B9ED"/>
<rect x="542" y="766" width="44" height="2" fill="#76B9ED"/>
<rect x="595" y="766" width="40" height="2" fill="#76B9ED"/>
<path d="M419.1,748 L408.71,742.00 A12,12 0 0 1 429.49,742.00 Z" fill="#DB4437"/><path d="M419.1,748 L429.49,742.00 A12,12 0 0 1 419.10,760.00 Z" fill="#F4B400"/><path d="M419.1,748 L419.10,760.00 A12,12 0 0 1 408.71,742.00 Z" fill="#0F9D58"/>
<circle cx="419.1" cy="748" r="5.4" fill="#FFFFFF"/><circle cx="419.1" cy="748" r="4.3" fill="#4285F4"/>
<rect x="457" y="739" width="10" height="3" fill="#E8A317"/><rect x="457" y="740.5" width="21.4" height="15.5" fill="#FFD65C"/><path d="M461.4,757 V749 H474.9 V757 H471 V752 H465.3 V757Z" fill="#4A9CE0"/>
<polygon points="504.8,743.4 516.9,736.6 529.2,743.4" fill="#0A5CB8"/><rect x="504.8" y="743.4" width="24.4" height="15.6" fill="#28A8EA"/><polygon points="504.8,759 516.9,751 529.2,759" fill="#1490DF"/><polygon points="516.9,751 529.2,743.4 529.2,759" fill="#50C8F5"/><polygon points="507,744 527,744 517,751" fill="#F0F0F0"/>
<rect x="542" y="728" width="44" height="38" fill="#525A5E"/><rect x="586" y="728" width="2" height="40" fill="#3C4448"/>
<rect x="559.9" y="737" width="18.2" height="5.5" fill="#41A5EE"/><rect x="559.9" y="742.5" width="18.2" height="5" fill="#2B7CD3"/><rect x="559.9" y="747.5" width="18.2" height="5.2" fill="#185ABD"/><rect x="559.9" y="752.7" width="18.2" height="5.2" fill="#103F91"/>
<rect x="554" y="742" width="12" height="12.1" fill="#185ABD" rx="0.8"/>
<path d="M555.6,744.6 L557.3,751.4 L559.9,745.8 L562.5,751.4 L564.3,744.6" fill="none" stroke="#fff" stroke-width="1.4"/>
<rect x="608.9" y="736.8" width="18.2" height="5.5" fill="#33C481"/><rect x="608.9" y="742.3" width="18.2" height="5.3" fill="#21A366"/><rect x="608.9" y="747.6" width="18.2" height="5.3" fill="#107C41"/><rect x="608.9" y="752.9" width="18.2" height="5.3" fill="#185C37"/>
<rect x="603" y="742" width="12.5" height="12.1" fill="#107C41" rx="0.8"/>
<path d="M606.3,744.6 L612,751.6 M612,744.6 L606.3,751.6" fill="none" stroke="#fff" stroke-width="1.5"/>
<defs><linearGradient id="edg" x1="0" y1="0" x2="1" y2="1"><stop offset="0" stop-color="#2FC1E8"/><stop offset="0.6" stop-color="#3FD07A"/><stop offset="1" stop-color="#6BE04A"/></linearGradient><linearGradient id="edb" x1="0" y1="0" x2="0" y2="1"><stop offset="0" stop-color="#1C8CE0"/><stop offset="1" stop-color="#0B55B8"/></linearGradient></defs>
<circle cx="663.9" cy="747.8" r="12" fill="url(#edg)"/>
<path d="M652,749 C652,741 660,738.5 664,740.5 C670,742 670,748 664,748.5 C660,749 659,753 663,755.5 C667,758 673,757 676,754 C673,759 668,760 663.9,759.8 C657,759.8 652,755 652,749Z" fill="url(#edb)"/>
<circle cx="665.8" cy="748.3" r="2.6" fill="#1F2A30"/>
<path d="M706.8,742 V738.5 Q706.8,737.5 707.8,737.5 H717.2 Q718.2,737.5 718.2,738.5 V742" fill="none" stroke="#2AA0E6" stroke-width="1.4"/>
<rect x="700.9" y="740.6" width="23.1" height="19.2" rx="2.5" fill="#F5F5F5"/>
<rect x="708" y="746.1" width="3.9" height="3.9" fill="#F25022"/><rect x="713" y="746.1" width="3.8" height="3.9" fill="#7FBA00"/><rect x="708" y="751" width="3.9" height="3.9" fill="#00A4EF"/><rect x="713" y="751" width="3.8" height="3.9" fill="#FFB900"/>
<path d="M1123.3,750.8 L1129.2,744.8 L1135.1,750.8" fill="none" stroke="#fff" stroke-width="1.1"/>
<g fill="none" stroke="#fff" stroke-width="1"><rect x="1149.5" y="744" width="7" height="8" rx="1.5"/><path d="M1156.5,746.5 L1159.5,744.8 V751.2 L1156.5,749.5"/><path d="M1148,741.5 Q1153,739.5 1158,741.5 M1148,755 Q1153,757 1158,755"/></g>
<g fill="none" stroke="#fff" stroke-width="1"><rect x="1172.5" y="742.5" width="12" height="9"/><path d="M1178.5,751.5 V755.5 M1175,755.5 H1182"/><rect x="1169.5" y="742.5" width="4" height="4"/></g>
<g fill="none" stroke="#fff" stroke-width="1"><path d="M1193,745.5 H1196 L1200,742 V754.5 L1196,751 H1193Z"/><path d="M1202.5,745.5 Q1204,748.2 1202.5,751 M1205,743.5 Q1207.5,748.2 1205,753" /><path d="M1207.5,741.5 Q1211,748.2 1207.5,755" stroke="#9A9A9A"/></g>
<g fill="none" stroke="#fff" stroke-width="1"><path d="M1325,740.5 H1341 V752 H1333 L1329.5,755.5 V752 H1325Z" fill="#fff"/></g>
<path d="M1328,743.5 H1338 M1328,746 H1338 M1328,748.5 H1336" stroke="#1F2A30" stroke-width="0.9"/>
<circle cx="1340.5" cy="755" r="7.8" fill="#2A2F33" stroke="#9A9EA0" stroke-width="1"/>
<text x="1338" y="759.3" font-family="Liberation Sans" font-size="11" fill="#FFFFFF" font-weight="bold" font-style="normal" text-anchor="start" textLength="5.5" lengthAdjust="spacingAndGlyphs" stroke="#FFFFFF" stroke-width="0.2" >1</text>
<rect x="1360.5" y="728" width="1" height="40" fill="#5A6266"/>
<rect x="1350" y="157" width="16" height="549" fill="#E0E0E0" />
<rect x="1350.5" y="159.5" width="14.5" height="14" fill="#FFFFFF" stroke="#C6C6C6"/>
<rect x="1350.5" y="177.5" width="14.5" height="30.5" fill="#FFFFFF" stroke="#C6C6C6"/>
<rect x="1350.5" y="689.5" width="14.5" height="14" fill="#FFFFFF" stroke="#C6C6C6"/>
<g fill="none" stroke="#7A7A7A" stroke-width="0.9"><path d="M210.8,711 H217 V723 M217,711 L210.8,712.5 V722.5 L217,723"/><path d="M217,711 H223.5"/><path d="M218.5,714.5 L223.5,719.5 M223.5,714.5 L218.5,719.5" stroke-width="1.1"/></g>
<circle cx="1043.5" cy="716.5" r="5.8" fill="none" stroke="#666666" stroke-width="1.1"/><path d="M1041.2,714.2 L1045.8,718.8 M1045.8,714.2 L1041.2,718.8" stroke="#666666" stroke-width="1.1"/>
<g fill="none" stroke="#666666" stroke-width="1"><path d="M1079.7,711 H1085.6 V722.5 H1079.7Z M1085.6,711 H1091.5 V722.5 H1085.6Z"/><path d="M1081.2,713.5 H1084.2 M1081.2,716 H1084.2 M1081.2,718.5 H1084.2 M1087,713.5 H1090 M1087,716 H1090 M1087,718.5 H1090"/></g>
<rect x="1106.3" y="707" width="39.3" height="21" fill="#C6C6C6"/>
<g fill="none" stroke="#505050" stroke-width="1"><rect x="1119.5" y="710.9" width="13" height="11.5"/><path d="M1121.5,713.5 H1130.5 M1121.5,715.8 H1130.5 M1121.5,718 H1130.5 M1121.5,720.2 H1130.5"/></g>
<g fill="none" stroke="#666666" stroke-width="1"><path d="M1167,722.5 H1159.5 V711 H1170 V716"/><path d="M1161.5,713.5 H1168 M1161.5,716 H1165.5 M1161.5,718.5 H1164.5"/></g>
<circle cx="1169.3" cy="719.5" r="3.6" fill="#666666"/><path d="M1167,718 Q1169,719 1168.3,721.5 M1170,716.5 Q1171,718.5 1172.5,719" stroke="#F3F3F3" stroke-width="0.8" fill="none"/>
<rect x="1192.4" y="716" width="7.3" height="1.1" fill="#666666"/>
<rect x="1310" y="716" width="7.8" height="1.1" fill="#666666"/><rect x="1313.35" y="712.6" width="1.1" height="7.9" fill="#666666"/>
<polygon points="1354.5,169.5 1361.5,169.5 1358,165.5" fill="#606060"/>
<polygon points="1354.5,694 1361.5,694 1358,698" fill="#606060"/>
<rect x="433" y="325" width="1" height="17.5" fill="#000000"/>
<path d="M744.2,212 Q742,213 743,216.5 Q745,220.5 749.5,222 Q752.5,222.8 753.5,220.5 L753.3,219.3 L750.6,217.6 L749.3,218.8 Q747.2,218 746,215.2 L747.2,214 L746,211 Z" fill="#fff"/>
<rect x="741.3" y="237.3" width="13.8" height="9.2" fill="#fff"/><path d="M741.5,237.8 L748.2,243 L755,237.8 M741.5,246.2 L746,241.6 M755,246.2 L750.5,241.6" fill="none" stroke="#80C697" stroke-width="1"/>
<path d="M745,261 V271 L747.3,268.8 L749.2,272.6 L751,271.7 L749.2,268.1 L752.5,267.8 Z" fill="#fff"/>
</svg>
<div id="doc">
<div class="ln" id="ln0" style="top:334.6px;letter-spacing:-0.005px;left:433.50px;"><b>CONVENIO DE COOPERACIÓN INTERINSTITUCIONAL ENTRE</b></div>
<div class="ln" id="ln1" style="top:353.0px;letter-spacing:0.099px;left:380.40px;"><b>GOBIERNO AUTÓNOMO DESCENTRALIZADO PARROQUIAL RURAL VALLE</b></div>
<div class="ln" id="ln2" style="top:371.6px;letter-spacing:0.055px;left:444.00px;"><b>HERMOSO Y LA COORDINACIÓN ZONAL DE EDUCACIÓN 4</b></div>
<div class="ln" id="ln3" style="top:405.6px;word-spacing:4.734px;">Comparecen a la suscripción del presente convenio de Cooperación, por una parte, el</div>
<div class="ln" id="ln4" style="top:424.2px;word-spacing:3.747px;"><b>GOBIERNO AUTÓNOMO DESCENTRALIZADO PARROQUIAL RURAL VALLE</b></div>
<div class="ln" id="ln5" style="top:442.4px;word-spacing:0.147px;"><b>HERMOSO</b>, representado legalmente por el señor presidente Washington Morales Chávez, a</div>
<div class="ln" id="ln6" style="top:461.2px;word-spacing:0.878px;">quien para efectos del presente convenio se denominará <b>"EL GAD PARROQUIAL"</b> y, por</div>
<div class="ln" id="ln7" style="top:479.4px;word-spacing:-0.286px;">otra parte, <b>COORDINACIÓN ZONAL DE EDUCACIÓN 4,</b> representada legalmente por la</div>
<div class="ln" id="ln8" style="top:497.8px;word-spacing:0.117px;">Ing. Mónica Yánez, a quien para efectos del presente convenio se denominará <b>"Coordinador</b></div>
<div class="ln" id="ln9" style="top:516.4px;word-spacing:3.484px;"><b>CZ 4",</b> quienes de manera libre y voluntaria acuerdan celebrar el presente convenio de</div>
<div class="ln" id="ln10" style="top:534.7px;letter-spacing:-0.010px;">conformidad con las siguientes cláusulas:</div>
<div class="ln" id="ln11" style="top:569.4px;letter-spacing:0.007px;"><b>PRIMERA. - ANTECEDENTES:</b></div>
<div class="ln" id="ln12" style="top:603.1px;word-spacing:1.842px;">Que, en base a los requerimientos de las Instituciones Educativas unidocente, bidocentes y</div>
<div class="ln" id="ln13" style="top:621.7px;word-spacing:0.064px;">bachillerato, el GAD Parroquial Valle Hermoso mediante Oficio <b>Nro. GADPRVH-O-WMC-</b></div>
<div class="ln" id="ln14" style="top:640.3px;word-spacing:0.480px;"><b>329-2019</b>, con fecha 02 de julio del 2019, suscrito por el Sr. Washington Morales Chávez, en</div>
<div class="ln" id="ln15" style="top:659.0px;word-spacing:0.719px;">calidad de Presidente del GAD Parroquial Valle Hermoso, solicita al Señor Director Distrital</div>
<div class="ln" id="ln16" style="top:677.4px;word-spacing:0.775px;">de Educación, se proceda con los trámites correspondientes para la elaboración del convenio</div>
<div class="ln" id="ln17" style="top:695.8px;word-spacing:-0.202px;">acordado entre el <b>DISTRITO DE EDUCACIÓN 23D02 y el GAD PARROQUIAL VALLE</b></div>
</div>
</body></html>
